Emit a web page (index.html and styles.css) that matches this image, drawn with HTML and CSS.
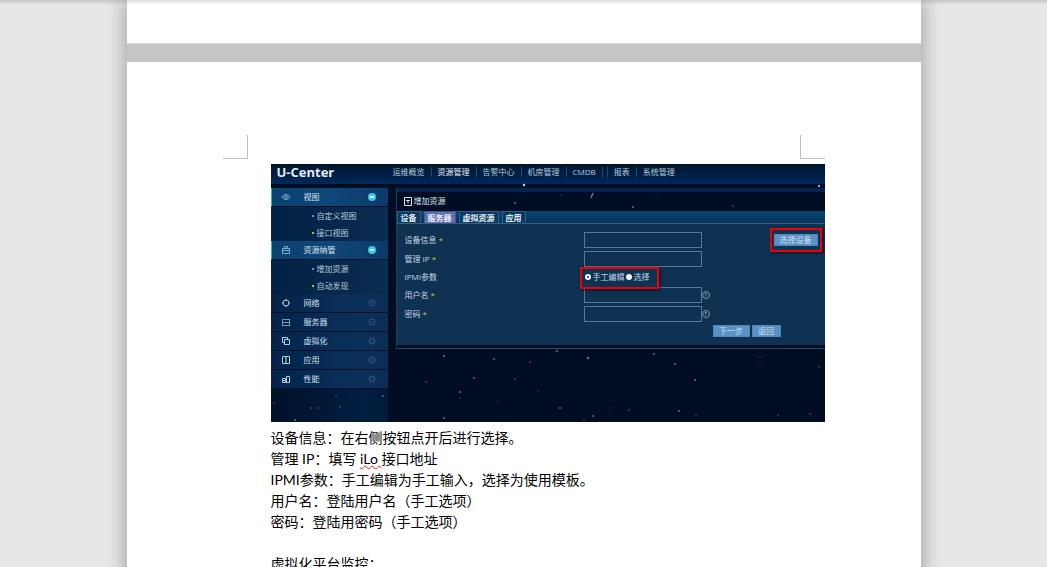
FILE: index.html
```
<!DOCTYPE html>
<html lang="zh-CN">
<head>
    <meta charset="UTF-8">
    <meta name="viewport" content="width=device-width, initial-scale=1.0">
    <title>U-Center</title>
    <link rel="stylesheet" href="styles.css">
</head>
<body>
    <div class="workspace">
        <div class="pages">
            <section class="page page-prev"></section>

            <section class="page page-current">
                <div class="crop-marks">
                    <span class="mark mark-left"></span>
                    <span class="mark mark-right"></span>
                </div>

                <div class="content">
                    <!-- U-Center console -->
                    <div class="app">
                        <svg class="stars" viewBox="0 0 554 258" fill="#54758f">
                            <circle cx="253" cy="21" r="1.2" fill="#b9d3e6"/>
                            <circle cx="548" cy="22" r="1.1" fill="#b9d3e6"/>
                            <path d="M320 34l2-5" stroke="#56779a" stroke-width="1.5"/>
                            <circle cx="244" cy="39" r="1"/>
                            <circle cx="362" cy="43" r="1"/>
                            <circle cx="462" cy="42" r=".8"/>
                            <circle cx="290" cy="31" r=".6"/>
                            <circle cx="385" cy="31" r=".6"/>
                            <circle cx="173" cy="192" r="1"/>
                            <circle cx="155" cy="218" r=".7"/>
                            <circle cx="173" cy="254" r=".9"/>
                            <circle cx="223" cy="195" r=".9"/>
                            <circle cx="203" cy="214" r=".9"/>
                            <circle cx="189" cy="228" r="1"/>
                            <circle cx="189" cy="234" r=".5"/>
                            <circle cx="244" cy="215" r=".8"/>
                            <circle cx="259" cy="198" r=".8"/>
                            <circle cx="286" cy="187" r="1"/>
                            <circle cx="317" cy="194" r="1.3"/>
                            <circle cx="267" cy="227" r=".6"/>
                            <circle cx="227" cy="238" r=".6"/>
                            <circle cx="289" cy="244" r="1"/>
                            <circle cx="322" cy="252" r=".9"/>
                            <circle cx="313" cy="256" r=".7"/>
                            <circle cx="340" cy="244" r=".6"/>
                            <circle cx="358" cy="246" r=".8"/>
                            <circle cx="383" cy="190" r="1"/>
                            <circle cx="404" cy="200" r="1.1"/>
                            <circle cx="424" cy="216" r="1"/>
                            <circle cx="408" cy="247" r="1"/>
                            <circle cx="425" cy="251" r=".7"/>
                            <circle cx="489" cy="193" r=".6"/>
                            <circle cx="489" cy="202" r=".6"/>
                            <circle cx="548" cy="203" r=".7"/>
                            <circle cx="507" cy="251" r=".7"/>
                            <circle cx="539" cy="250" r=".7"/>
                            <circle cx="112" cy="232" r=".9"/>
                            <circle cx="65" cy="232" r=".7"/>
                            <circle cx="40" cy="244" r=".8"/>
                            <circle cx="47" cy="244" r=".8"/>
                            <circle cx="69" cy="243" r=".8"/>
                            <circle cx="3" cy="239" r=".7"/>
                            <circle cx="24" cy="256" r="1"/>
                        </svg>

                        <header class="app-header">
                            <div class="logo">U-Center</div>
                            <nav class="top-nav">
                                <a href="#">运维概览</a>
                                <a href="#" class="active">资源管理</a>
                                <a href="#">告警中心</a>
                                <a href="#">机房管理</a>
                                <a href="#" class="cmdb">CMDB</a>
                                <a href="#">报表</a>
                                <a href="#">系统管理</a>
                            </nav>
                        </header>

                        <div class="app-body">
                            <aside class="sidebar">
                                <a href="#" class="menu-item open">
                                    <svg class="icon" viewBox="0 0 10 10"><path d="M1 5q4-5 8 0q-4 5-8 0z"/><circle cx="5" cy="5" r="1.2"/></svg>
                                    <span>视图</span>
                                    <svg class="toggle" viewBox="0 0 8 8"><circle cx="4" cy="4" r="4"/><path d="M2 4h4"/></svg>
                                </a>
                                <ul class="submenu">
                                    <li><a href="#">自定义视图</a></li>
                                    <li class="lit"><a href="#">接口视图</a></li>
                                </ul>
                                <a href="#" class="menu-item open">
                                    <svg class="icon" viewBox="0 0 10 10"><path d="M1.500 3.500h7v5h-7zM3.500 3.500v-2h3v2M1.500 5.500h7"/></svg>
                                    <span>资源纳管</span>
                                    <svg class="toggle" viewBox="0 0 8 8"><circle cx="4" cy="4" r="4"/><path d="M2 4h4"/></svg>
                                </a>
                                <ul class="submenu">
                                    <li><a href="#">增加资源</a></li>
                                    <li class="lit"><a href="#">自动发现</a></li>
                                </ul>
                                <a href="#" class="menu-item">
                                    <svg class="icon" viewBox="0 0 10 10"><circle cx="5" cy="5" r="3"/><path d="M5 1v1.500M5 7.500v1.500M1 5h1.500M7.500 5h1.500"/></svg>
                                    <span>网络</span>
                                    <svg class="toggle" viewBox="0 0 8 8"><circle cx="4" cy="4" r="3"/><path d="M2.500 4h3"/></svg>
                                </a>
                                <a href="#" class="menu-item">
                                    <svg class="icon dim" viewBox="0 0 10 10"><path d="M1 2.500h8M1 5.500h8M1 8.500h8M1.500 2v7M8.500 2v7"/></svg>
                                    <span>服务器</span>
                                    <svg class="toggle" viewBox="0 0 8 8"><circle cx="4" cy="4" r="3"/><path d="M2.500 4h3"/></svg>
                                </a>
                                <a href="#" class="menu-item">
                                    <svg class="icon" viewBox="0 0 10 10"><path d="M3.500 3.500h5v5h-5zM3.500 6.500h-2v-5h5v2"/></svg>
                                    <span>虚拟化</span>
                                    <svg class="toggle" viewBox="0 0 8 8"><circle cx="4" cy="4" r="3"/><path d="M2.500 4h3"/></svg>
                                </a>
                                <a href="#" class="menu-item">
                                    <svg class="icon" viewBox="0 0 10 10"><path d="M1.500 1.500h7v7h-7zM5 3v4M4 3h2M4 7h2"/></svg>
                                    <span>应用</span>
                                    <svg class="toggle" viewBox="0 0 8 8"><circle cx="4" cy="4" r="3"/><path d="M2.500 4h3"/></svg>
                                </a>
                                <a href="#" class="menu-item">
                                    <svg class="icon" viewBox="0 0 10 10"><path d="M1.500 4.500h3v4h-3zM5.500 2.500h3v6h-3zM1.500 6.500h3M4.500 8.500h1"/></svg>
                                    <span>性能</span>
                                    <svg class="toggle" viewBox="0 0 8 8"><circle cx="4" cy="4" r="3"/><path d="M2.500 4h3"/></svg>
                                </a>
                            </aside>

                            <main class="main">
                                <div class="panel">
                                    <div class="panel-title">
                                        <svg class="icon" viewBox="0 0 10 10"><path d="M1.500 1.500h7v8h-7zM3 4.500h4M5 4.500v3"/></svg>
                                        <span>增加资源</span>
                                    </div>
                                    <div class="tabs">
                                        <button type="button" class="tab">设备</button>
                                        <button type="button" class="tab selected">服务器</button>
                                        <button type="button" class="tab">虚拟资源</button>
                                        <button type="button" class="tab">应用</button>
                                    </div>
                                    <form class="form">
                                        <div class="form-row">
                                            <label for="device">设备信息 <i>*</i></label>
                                            <input type="text" id="device">
                                            <div class="highlight highlight-device">
                                                <button type="button" class="btn">选择设备</button>
                                            </div>
                                        </div>
                                        <div class="form-row">
                                            <label for="ip">管理 IP <i>*</i></label>
                                            <input type="text" id="ip">
                                        </div>
                                        <div class="form-row form-row-radio">
                                            <span class="label">IPMI参数</span>
                                            <div class="radios">
                                                <input type="radio" name="ipmi" id="manual" checked>
                                                <label for="manual">手工编辑</label>
                                                <input type="radio" name="ipmi" id="pick">
                                                <label for="pick">选择</label>
                                                <span class="highlight highlight-radios"></span>
                                            </div>
                                        </div>
                                        <div class="form-row">
                                            <label for="user">用户名 <i>*</i></label>
                                            <input type="text" id="user">
                                            <span class="help">?</span>
                                        </div>
                                        <div class="form-row">
                                            <label for="password">密码 <i>*</i></label>
                                            <input type="password" id="password">
                                            <span class="help">?</span>
                                        </div>
                                        <div class="form-actions">
                                            <button type="button" class="btn">下一步</button>
                                            <button type="button" class="btn btn-back">返回</button>
                                        </div>
                                    </form>
                                </div>
                            </main>
                        </div>
                    </div>

                    <div class="notes">
                        <p>设备信息：在右侧按钮点开后进行选择。</p>
                        <p>管理 IP：填写 <span class="typo">iLo </span>接口地址</p>
                        <p>IPMI参数：手工编辑为手工输入，选择为使用模板。</p>
                        <p>用户名：登陆用户名（手工选项）</p>
                        <p>密码：登陆用密码（手工选项）</p>
                        <p><br></p>
                        <p>虚拟化平台监控：</p>
                    </div>
                </div>
            </section>
        </div>
    </div>
</body>
</html>
```
FILE: styles.css
```
* {
    margin: 0;
    padding: 0;
    box-sizing: border-box;
}

body {
    background: #e7e7e7;
    font-family: Lato, "Noto Sans CJK SC", sans-serif;
    color: #000;
}

a {
    color: inherit;
    text-decoration: none;
}

/* Document area */
.workspace {
    position: relative;
    height: 100vh;
    overflow: hidden;
}

.workspace::before {
    content: "";
    position: absolute;
    z-index: 2;
    top: 0;
    left: 0;
    right: 0;
    height: 5px;
    background: linear-gradient(rgba(0, 0, 0, 0.14), rgba(0, 0, 0, 0));
}

.pages {
    display: flex;
    flex-direction: column;
    gap: 18px;
    max-width: 794px;
    margin: 0 auto;
    background: #c6c6c6;
    box-shadow: 0 0 18px 2px rgba(0, 0, 0, 0.3);
}

.page {
    background: #fff;
}

.page-prev {
    height: 44px;
    border-bottom: 1px solid #d8d8d8;
}

.page-current {
    padding: 73px 96px 96px;
}

.crop-marks {
    display: flex;
    justify-content: space-between;
    margin-bottom: 5px;
}

.mark {
    width: 25px;
    height: 24px;
    border-bottom: 1px solid #bfbfbf;
}

.mark-left {
    border-right: 1px solid #bfbfbf;
}

.mark-right {
    border-left: 1px solid #bfbfbf;
}

.content {
    padding-left: 48px;
}

/* Console */
.app {
    position: relative;
    min-height: 258px;
    background: #000d23;
    color: #b4cbdd;
    font-family: "Open Sans", "Noto Sans CJK SC", sans-serif;
    font-size: 8px;
    line-height: 12px;
}

.stars {
    position: absolute;
    z-index: 1;
    top: 0;
    left: 0;
    width: 100%;
    pointer-events: none;
}

.app-header {
    display: flex;
    height: 20px;
    background: linear-gradient(#001526, #001a3c 30%, #00295a);
}

.logo {
    width: 116px;
    padding-left: 6px;
    color: #e3edf5;
    font-size: 13px;
    font-weight: bold;
    line-height: 16px;
}

.top-nav {
    display: flex;
    align-items: center;
    height: 16px;
}

.top-nav a {
    padding: 0 6px;
    border-right: 1px solid #24486e;
    line-height: 10px;
}

.top-nav a:last-child {
    border-right: none;
}

.top-nav .active {
    color: #e6f1f8;
}

.top-nav .cmdb {
    margin-right: 4px;
}

.top-nav .cmdb + a {
    border-left: 1px solid #24486e;
}

.app-body {
    display: flex;
    gap: 8px;
    padding-top: 4px;
}

.sidebar {
    width: 117px;
    min-height: 234px;
    background: linear-gradient(90deg, #001128, #001e42 80%, #001a3a);
}

.icon {
    width: 10px;
    height: 10px;
    fill: none;
    stroke: currentColor;
    stroke-width: 1;
}

.icon.dim {
    color: #7896b4;
}

.toggle {
    width: 8px;
    height: 8px;
    margin-left: auto;
    fill: none;
    stroke: #2f5a80;
}

.menu-item {
    display: flex;
    align-items: center;
    height: 19px;
    padding: 0 12px 0 10px;
    border-bottom: 1px solid #001026;
    background: linear-gradient(90deg, #03234a, #0a305a 70%, #0c2d54);
}

.menu-item span {
    margin-left: 13px;
    color: #d3e3ee;
}

.menu-item.open {
    border-left: 1px solid #27b4dc;
    padding-left: 9px;
    background: linear-gradient(90deg, #0a4270, #114679 50%, #0b3a68);
}

.open .icon {
    color: #7fa9c8;
}

.open .toggle {
    fill: #3cc8ea;
    stroke: none;
}

.open .toggle path {
    stroke: #fff;
    stroke-width: 1.5;
}

.submenu {
    list-style: none;
    background: linear-gradient(90deg, #022245, #0a2c50);
}

.submenu li {
    display: flex;
    align-items: center;
    height: 17px;
    padding-left: 41px;
}

.submenu li::before {
    content: "";
    width: 2px;
    height: 2px;
    margin-right: 3px;
    background: #5f9cc4;
}

.submenu .lit::before {
    background: #9cc832;
}

.main {
    flex: 1;
}

.panel {
    border-left: 1px solid #173c60;
    border-bottom: 1px solid #2b4a63;
    padding-bottom: 3px;
}

.panel-title {
    display: flex;
    align-items: center;
    gap: 1px;
    height: 23px;
    padding-left: 6px;
    padding-bottom: 2px;
    border-top: 4px solid #062450;
    background: #000d22;
    color: #dce8f0;
}

.tabs {
    display: flex;
    gap: 3px;
    height: 13px;
    border-bottom: 1px solid #326084;
    background: linear-gradient(#054878, #0b3358);
}

.tab {
    height: 12px;
    padding: 0 3px;
    border: 1px solid #2d6087;
    border-bottom: none;
    background: #0a3a62;
    color: #e4eef5;
    font: inherit;
    font-weight: bold;
    line-height: 10px;
}

.tab.selected {
    background: #6a6cb0;
}

.form {
    padding: 6px 0 8px 8px;
    background: #0f3152;
    color: #c6d8e5;
}

.form-row {
    position: relative;
    display: flex;
    align-items: center;
    height: 19px;
}

.form-row > label,
.form-row > .label {
    width: 179px;
}

.form-row i {
    color: #b5c94a;
    font-style: normal;
}

.form-row-radio {
    height: 17px;
}

.form input[type="text"],
.form input[type="password"] {
    width: 118px;
    height: 16px;
    border: 1px solid #55799a;
    background: transparent;
    color: #dce8f0;
    font: inherit;
}

.radios {
    position: relative;
    z-index: 1;
    display: flex;
    align-items: center;
}

.radios input {
    appearance: none;
    width: 6px;
    height: 6px;
    margin: 0 2px 0 1px;
    border-radius: 50%;
    background: #eef4f8;
}

.radios input:checked {
    border: 2px solid #eef4f8;
    background: #0f3152;
}

.help {
    width: 8px;
    height: 8px;
    border: 1px solid #7c9ab3;
    border-radius: 50%;
    font-size: 6px;
    line-height: 6px;
    text-align: center;
}

.form-actions {
    display: flex;
    gap: 2px;
    padding: 2px 0 0 308px;
}

.btn {
    width: 37px;
    height: 12px;
    border: 1px solid #4f88ba;
    background: #5a92c4;
    color: #d0dbf0;
    font: inherit;
    line-height: 10px;
}

.btn-back {
    width: 29px;
}

/* Red call-outs over the console */
.highlight {
    position: absolute;
    border: 2px solid #f00000;
    box-shadow: 1px 1px 3px rgba(0, 0, 0, 0.6);
}

.highlight-device {
    top: -2px;
    right: 3px;
    padding: 4px 2px;
}

.highlight-device .btn {
    display: block;
    width: 44px;
}

.highlight-radios {
    top: -4px;
    left: -4px;
    width: 79px;
    height: 22px;
}

/* Document text */
.notes {
    padding-top: 5px;
    font-size: 14px;
    line-height: 21px;
}

.typo {
    text-decoration: underline wavy #e02020 1px;
    text-underline-offset: 1px;
}
```
